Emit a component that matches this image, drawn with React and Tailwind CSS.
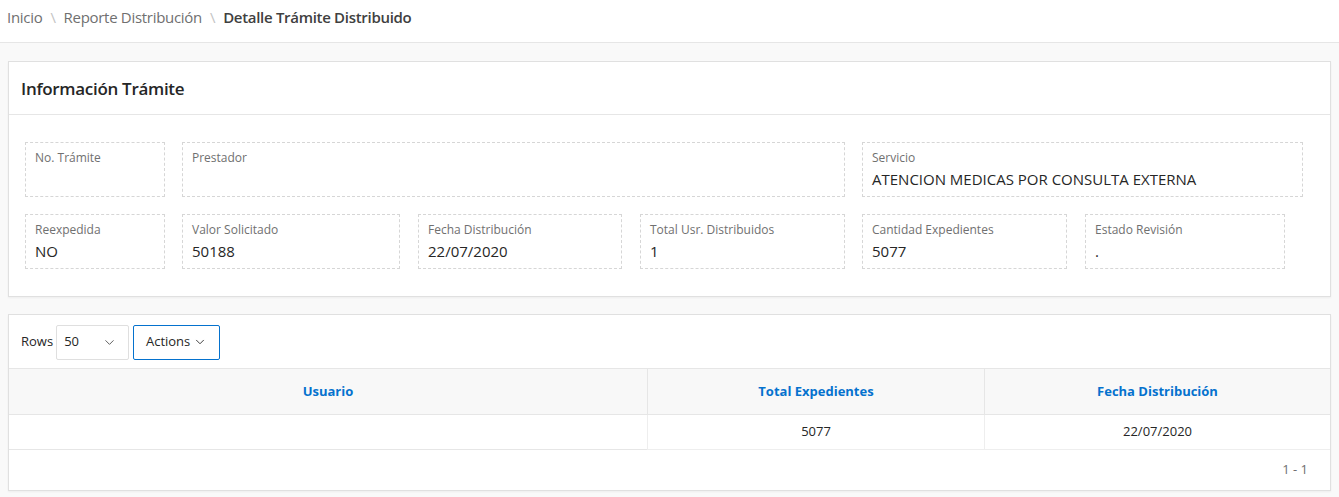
import { ChevronDown } from 'lucide-react';

const row1 = [
  { label: 'No. Trámite', value: '', w: 'w-[140px]', m: '' },
  { label: 'Prestador', value: '', w: 'w-[663px]', m: 'ml-[17px]' },
  { label: 'Servicio', value: 'ATENCION MEDICAS POR CONSULTA EXTERNA', w: 'w-[441px]', m: 'ml-[17px]' },
];

const row2 = [
  { label: 'Reexpedida', value: 'NO', w: 'w-[140px]', m: '' },
  { label: 'Valor Solicitado', value: '50188', w: 'w-[218px]', m: 'ml-[17px]' },
  { label: 'Fecha Distribución', value: '22/07/2020', w: 'w-[204px]', m: 'ml-[18px]' },
  { label: 'Total Usr. Distribuidos', value: '1', w: 'w-[205px]', m: 'ml-[18px]' },
  { label: 'Cantidad Expedientes', value: '5077', w: 'w-[205px]', m: 'ml-[17px]' },
  { label: 'Estado Revisión', value: '.', w: 'w-[200px]', m: 'ml-[18px]' },
];

function Field({ label, value, w, m }) {
  return (
    <div className={`${w} ${m} h-[55px] shrink-0 border border-dashed border-[#d6d6d6] px-[9px] pt-[7px]`}>
      <div className="text-[12px] leading-[16px] text-[#707070]">{label}</div>
      <div className="mt-[3px] text-[15px] leading-[20px] text-[#262626]">{value}</div>
    </div>
  );
}

export default function App() {
  return (
    <div className="min-h-[497px] bg-[#f9f9f9] font-['Open_Sans',sans-serif]">
      <div className="flex h-[43px] items-start border-b border-[#e6e6e6] bg-white px-[7px] pt-[6px] text-[15px] leading-[22px] tracking-[-0.3px] text-[#707070]">
        <span>Inicio</span>
        <span className="mx-[8px] text-[#c4c4c4]">\</span>
        <span>Reporte Distribución</span>
        <span className="mx-[8px] text-[#c4c4c4]">\</span>
        <span className="font-semibold text-[#404040]">Detalle Trámite Distribuido</span>
      </div>

      <div className="mx-[8px] mt-[18px] border border-[#e0e0e0] bg-white shadow-[0_1px_2px_rgba(0,0,0,0.05)]">
        <div className="flex h-[53px] items-center border-b border-[#e6e6e6] px-[12px] pt-[1px] text-[17px] font-semibold tracking-[-0.3px] text-[#262626]">
          Información Trámite
        </div>
        <div className="flex flex-col gap-[17px] px-[16px] pb-[27px] pt-[27px]">
          <div className="flex">
            {row1.map((f) => (
              <Field key={f.label} {...f} />
            ))}
          </div>
          <div className="flex">
            {row2.map((f) => (
              <Field key={f.label} {...f} />
            ))}
          </div>
        </div>
      </div>

      <div className="mx-[8px] mt-[17px] border border-[#e0e0e0] bg-white shadow-[0_1px_2px_rgba(0,0,0,0.05)]">
        <div className="flex h-[53px] items-center px-[12px] pt-[1px] text-[13px] text-[#262626]">
          <span className="mr-[3px]">Rows</span>
          <div className="flex h-[35px] w-[73px] items-center justify-between rounded-[2px] border border-[#dfdfdf] px-[7px]">
            <span>50</span>
            <ChevronDown size={15} strokeWidth={1.5} className="mr-[4px] text-[#555]" />
          </div>
          <button className="ml-[4px] flex h-[35px] w-[87px] items-center justify-center gap-[3px] rounded-[2px] border border-[#0572ce] text-[13px] text-[#262626]">
            Actions
            <ChevronDown size={14} strokeWidth={1.5} />
          </button>
        </div>
        <div className="grid grid-cols-[638px_337px_1fr] border-t border-[#e6e6e6]">
          <div className="flex h-[46px] items-center justify-center border-b border-[#e6e6e6] bg-[#f8f8f8] text-[13px] font-bold text-[#0572ce]">Usuario</div>
          <div className="flex h-[46px] items-center justify-center border-b border-l border-[#e6e6e6] bg-[#f8f8f8] text-[13px] font-bold text-[#0572ce]">Total Expedientes</div>
          <div className="flex h-[46px] items-center justify-center border-b border-l border-[#e6e6e6] bg-[#f8f8f8] text-[13px] font-bold text-[#0572ce]">Fecha Distribución</div>
          <div className="h-[35px] border-b border-[#e6e6e6]"></div>
          <div className="flex h-[35px] items-center justify-center border-b border-l border-[#eeeeee] text-[13px] text-[#262626]">5077</div>
          <div className="flex h-[35px] items-center justify-center border-b border-l border-[#eeeeee] text-[13px] text-[#262626]">22/07/2020</div>
        </div>
        <div className="flex h-[40px] items-center justify-end px-[22px] text-[13px] text-[#707070]">1 - 1</div>
      </div>
    </div>
  );
}
